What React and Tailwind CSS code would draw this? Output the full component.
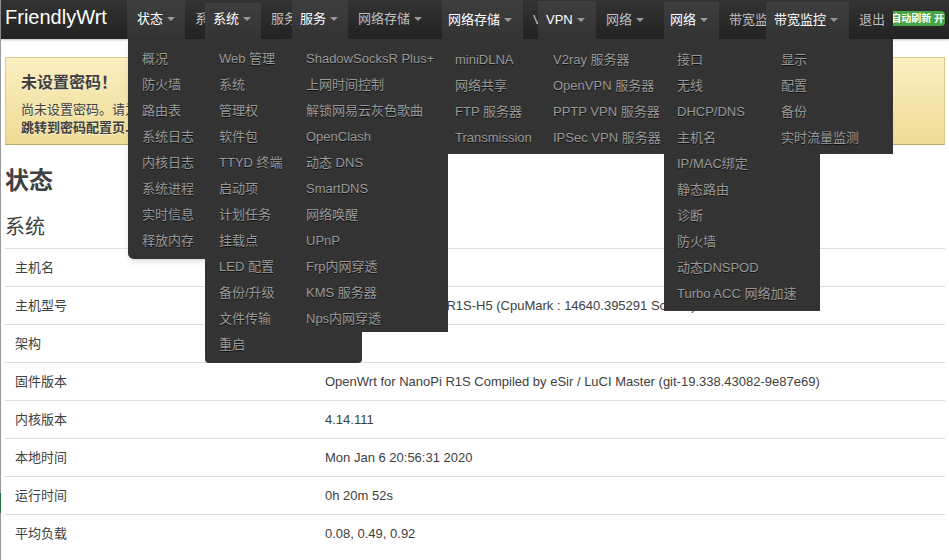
import React from "react";

const NAV = [
  { label: "状态", open: true, width: "w-[58px]", pad: "pl-2.5", top: "mt-0 h-[39px]", menuBox: "left-px w-[156px] rounded-b-md shadow-md",
    items: ["概况", "防火墙", "路由表", "系统日志", "内核日志", "系统进程", "实时信息", "释放内存"] },
  { label: "系统", width: "w-5" },
  { label: "系统", open: true, width: "w-14", pad: "pl-2", top: "mt-[3px] h-9", menuBox: "left-0 w-[157px] rounded-b-sm",
    items: ["Web 管理", "系统", "管理权", "软件包", "TTYD 终端", "启动项", "计划任务", "挂载点", "LED 配置", "备份/升级", "文件传输", "重启"] },
  { label: "服务", width: "w-[31px]" },
  { label: "服务", open: true, width: "w-14", pad: "pl-2", top: "mt-0 h-[39px]", menuBox: "left-0 w-[156px] h-[293px]",
    items: ["ShadowSocksR Plus+", "上网时间控制", "解锁网易云灰色歌曲", "OpenClash", "动态 DNS", "SmartDNS", "网络唤醒", "UPnP", "Frp内网穿透", "KMS 服务器", "Nps内网穿透"] },
  { label: "网络存储", width: "w-[94px]", caret: true },
  { label: "网络存储", open: true, low: true, width: "w-[81px]", pad: "pl-1.5", top: "mt-0 h-[39px]", menuBox: "left-0 w-[156px] h-[115px]",
    items: ["miniDLNA", "网络共享", "FTP 服务器", "Transmission"] },
  { label: "VPN", width: "w-[15px]", low: true },
  { label: "VPN", open: true, low: true, width: "w-[58px]", pad: "pl-2", top: "mt-px h-[38px]", menuBox: "left-0 w-[156px] h-[115px]", inset: "pl-[15px]",
    items: ["V2ray 服务器", "OpenVPN 服务器", "PPTP VPN 服务器", "IPSec VPN 服务器"] },
  { label: "网络", width: "w-[68px]", caret: true, low: true },
  { label: "网络", open: true, low: true, width: "w-[55px]", pad: "pl-1.5", top: "mt-0.5 h-[37px]", menuBox: "left-0 w-[156px] h-[272px]",
    items: ["接口", "无线", "DHCP/DNS", "主机名", "IP/MAC绑定", "静态路由", "诊断", "防火墙", "动态DNSPOD", "Turbo ACC 网络加速"] },
  { label: "带宽监控", width: "w-[47px]", low: true },
  { label: "带宽监控", open: true, low: true, width: "w-[83px]", pad: "pl-2", top: "mt-0.5 h-[37px]", menuBox: "left-0 w-[127px] h-[115px]", inset: "pl-[15px]",
    items: ["显示", "配置", "备份", "实时流量监测"] },
  { label: "退出", width: "w-11", low: true },
];

const ROWS = [
  ["主机名", ""],
  ["主机型号", "FriendlyElec NanoPi R1S-H5 (CpuMark : 14640.395291 Scores)"],
  ["架构", ""],
  ["固件版本", "OpenWrt for NanoPi R1S Compiled by eSir / LuCI Master (git-19.338.43082-9e87e69)"],
  ["内核版本", "4.14.111"],
  ["本地时间", "Mon Jan 6 20:56:31 2020"],
  ["运行时间", "0h 20m 52s"],
  ["平均负载", "0.08, 0.49, 0.92"],
];

function Caret() {
  return (
    <svg className="ml-1 shrink-0" width="8" height="4" viewBox="0 0 8 4" aria-hidden="true">
      <path d="M0 0H8L4 4Z" fill="#999" />
    </svg>
  );
}

function NavItem({ item }) {
  const line = item.low ? "pt-0.5" : "";
  if (!item.open) {
    return (
      <li className={`shrink-0 ${item.width}`}>
        <button type="button" className={`flex h-[37px] w-full items-center overflow-hidden whitespace-nowrap pl-2.5 text-[#bfbfbf] ${line}`}>
          <span className="shrink-0">{item.label}</span>
          {item.caret && <Caret />}
        </button>
      </li>
    );
  }
  return (
    <li className={`relative shrink-0 ${item.width}`}>
      <div className={`w-full bg-linear-to-b from-[#3e3e3e] to-[#333] ${item.top}`} />
      <button type="button" aria-expanded="true" className={`absolute inset-x-0 top-0 flex h-[37px] items-center whitespace-nowrap text-white ${item.pad} ${line}`}>
        <span>{item.label}</span>
        <Caret />
      </button>
      <ul className={`absolute top-[39px] bg-[#333] ${item.low ? "pt-2" : "pb-[5px] pt-[7px]"} ${item.menuBox}`}>
        {item.items.map((text) => (
          <li key={text}>
            <a href="#" className={`block h-[26px] whitespace-nowrap leading-[26px] text-[#999] [text-shadow:0_1px_0_#111] ${item.inset || (item.low ? "pl-[13px]" : "pl-3.5")}`}>
              {text}
            </a>
          </li>
        ))}
      </ul>
    </li>
  );
}

export default function App() {
  return (
    <div className="relative min-h-screen border-l border-[#999] bg-white font-['Liberation_Sans','Noto_Sans_CJK_SC',sans-serif] text-[13px] leading-[18px] text-[#404040]">
      <div className="absolute -left-px top-[493px] h-5 w-px bg-[#217346]" />
      <header className="relative z-10 flex h-[39px] bg-linear-to-b from-[#333] to-[#222] shadow-[0_1px_2px_rgba(0,0,0,0.25)]">
        <a href="#" className="w-[126px] shrink-0 pl-1 text-xl leading-[34px] text-white">FriendlyWrt</a>
        <nav>
          <ul className="flex">
            {NAV.map((item, i) => <NavItem key={i} item={item} />)}
          </ul>
        </nav>
        <button type="button" className="ml-auto mr-1 mt-[11px] flex h-[15px] w-[52px] shrink-0 items-center justify-end overflow-hidden whitespace-nowrap rounded-r bg-[#46a546] pr-px text-[10px] font-bold text-white">
          <span className="shrink-0">自动刷新 开</span>
        </button>
      </header>

      <main className="ml-1 mr-1 pt-[18px]">
        <section className="border border-[#d9c98a] border-b-[#b5a66c] bg-linear-to-b from-[#fceec1] to-[#eedc94] px-[15px] pb-[7px] pt-3.5 [text-shadow:0_1px_0_rgba(255,255,255,0.5)]">
          <h4 className="text-base font-bold leading-[22px]">未设置密码！</h4>
          <p className="pt-[7px]">尚未设置密码。请为root用户设置密码以保护主机并启用SSH。</p>
          <a href="#" className="block font-bold">跳转到密码配置页...</a>
        </section>
        <h2 className="pt-[18px] text-2xl font-bold leading-9">状态</h2>
        <h3 className="pb-1 pt-3 text-xl leading-[33px]">系统</h3>
        <table className="w-full table-fixed border-collapse text-left">
          <tbody>
            {ROWS.map(([label, value]) => (
              <tr key={label} className="h-[38px] border-t border-[#ddd]">
                <th scope="row" className="w-[310px] px-2.5 font-normal">{label}</th>
                <td className="px-2.5">{value}</td>
              </tr>
            ))}
          </tbody>
        </table>
      </main>
    </div>
  );
}
